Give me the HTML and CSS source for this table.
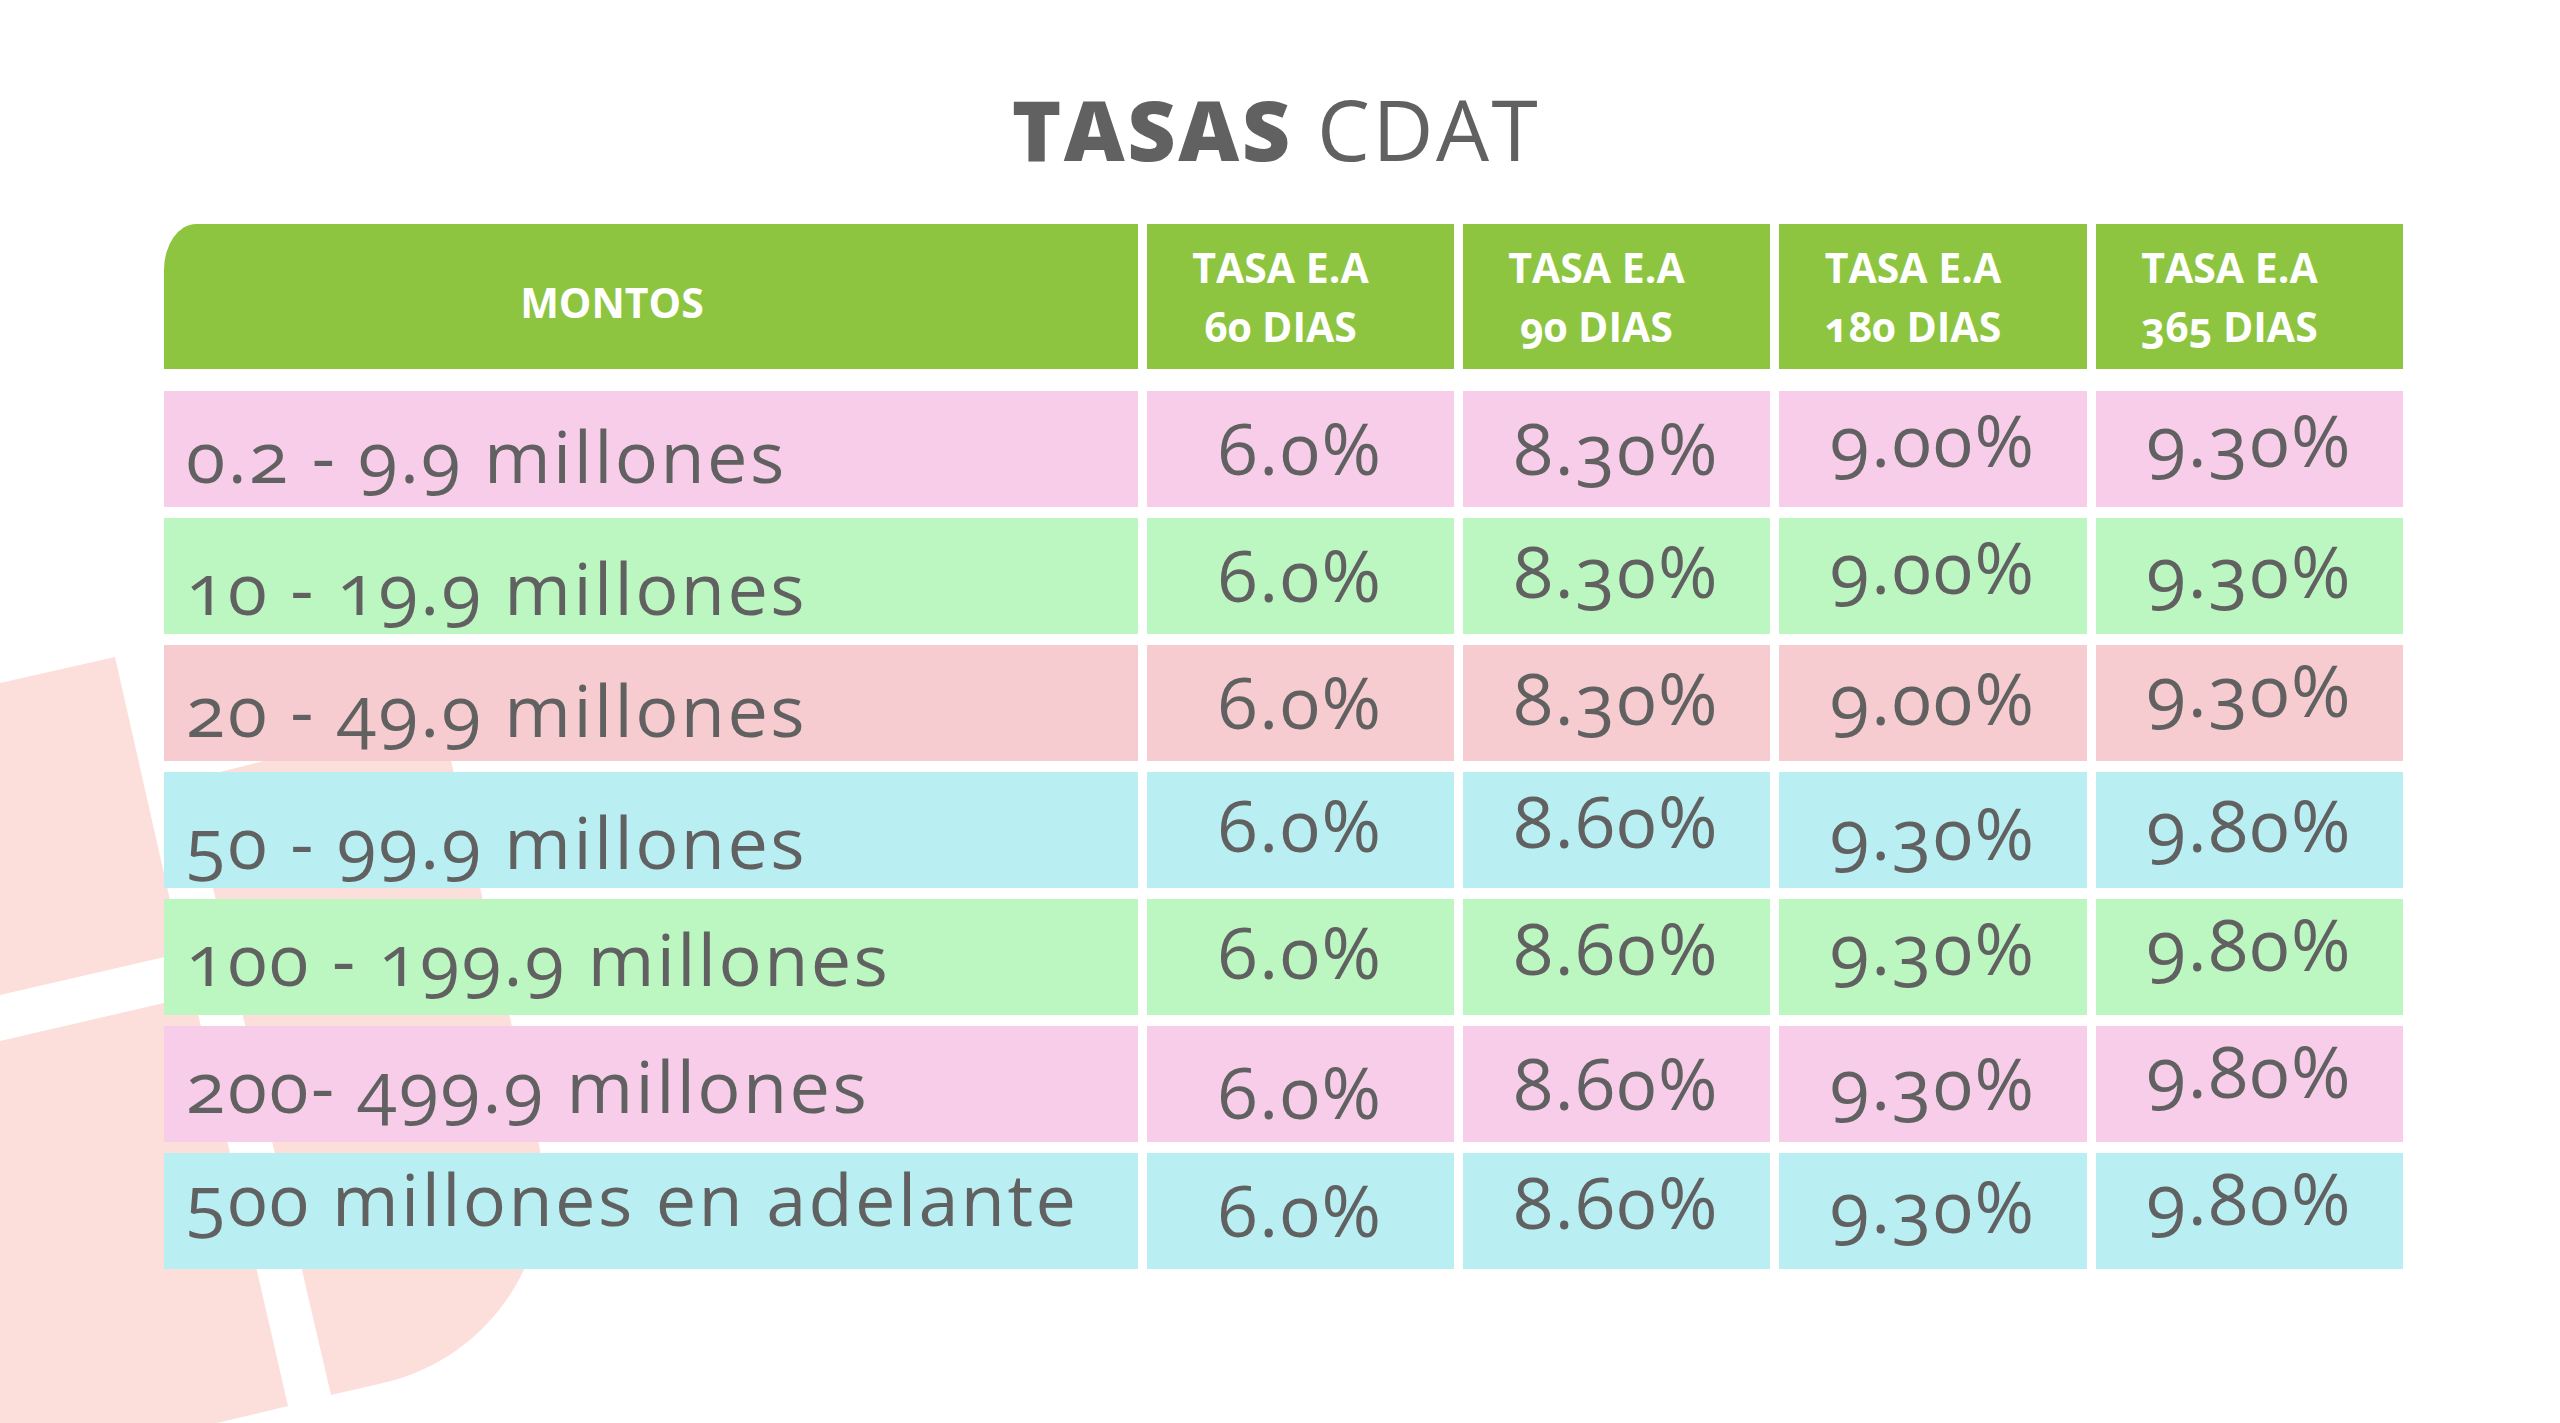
FILE: index.html
```html
<!DOCTYPE html>
<html lang="es">
<head>
<meta charset="utf-8">
<title>Tasas CDAT</title>
<link rel="stylesheet" href="styles.css">
</head>
<body>
<div class="page">
  <svg class="bg-shape" viewBox="0 0 2560 1423" width="2560" height="1423" aria-hidden="true">
    <path d="M0 683 L115 657 L182 953 L0 995 Z"/>
    <path d="M0 1041 L194 996 L288 1406 L0 1475 Z"/>
    <path d="M188 780 L441 717 L538 1140 C563 1249 493 1358 383 1383 L331 1395 Z"/>
  </svg>

  <h1 class="title"><strong>TASAS</strong> CDAT</h1>

  <div class="table">
    <div class="thead">
      <div class="th th-main">MONTOS</div>
      <div class="th">TASA E.A<br>60 DIAS</div>
      <div class="th">TASA E.A<br>90 DIAS</div>
      <div class="th">TASA E.A<br>180 DIAS</div>
      <div class="th">TASA E.A<br>365 DIAS</div>
    </div>

    <div class="tbody">
      <div class="td label pink lb-92">0.2 - 9.9 millones</div>
      <div class="td val pink v-d">6.0%</div>
      <div class="td val pink v-d">8.30%</div>
      <div class="td val pink v-b">9.00%</div>
      <div class="td val pink v-b">9.30%</div>

      <div class="td label green lb-97">10 - 19.9 millones</div>
      <div class="td val green v-d">6.0%</div>
      <div class="td val green v-c">8.30%</div>
      <div class="td val green v-b">9.00%</div>
      <div class="td val green v-c">9.30%</div>

      <div class="td label salmon lb-92">20 - 49.9 millones</div>
      <div class="td val salmon v-d">6.0%</div>
      <div class="td val salmon v-c">8.30%</div>
      <div class="td val salmon v-c">9.00%</div>
      <div class="td val salmon v-a">9.30%</div>

      <div class="td label cyan lb-97">50 - 99.9 millones</div>
      <div class="td val cyan v-c">6.0%</div>
      <div class="td val cyan v-b">8.60%</div>
      <div class="td val cyan v-e">9.30%</div>
      <div class="td val cyan v-c">9.80%</div>

      <div class="td label green lb-87">100 - 199.9 millones</div>
      <div class="td val green v-c">6.0%</div>
      <div class="td val green v-b">8.60%</div>
      <div class="td val green v-b">9.30%</div>
      <div class="td val green v-a">9.80%</div>

      <div class="td label pink lb-87">200- 499.9 millones</div>
      <div class="td val pink v-f">6.0%</div>
      <div class="td val pink v-d">8.60%</div>
      <div class="td val pink v-d">9.30%</div>
      <div class="td val pink v-a">9.80%</div>

      <div class="td label cyan lb-73">500 millones en adelante</div>
      <div class="td val cyan v-d">6.0%</div>
      <div class="td val cyan v-b">8.60%</div>
      <div class="td val cyan v-c">9.30%</div>
      <div class="td val cyan v-a">9.80%</div>
    </div>
  </div>
</div>
</body>
</html>
```

FILE: styles.css
```css
* {
  box-sizing: border-box;
}

html, body {
  margin: 0;
  padding: 0;
  background: #ffffff;
}

body {
  font-family: "Open Sans", "Liberation Sans", sans-serif;
  color: #616161;
  font-variant-numeric: oldstyle-nums;
}

.page {
  position: relative;
  width: 2560px;
  height: 1423px;
  overflow: hidden;
  padding-top: 87px;
}

.bg-shape {
  position: absolute;
  left: 0;
  top: 0;
  z-index: 0;
}

.bg-shape path {
  fill: #fcdfdb;
}

.title {
  position: relative;
  z-index: 1;
  margin: 0;
  text-align: center;
  font-size: 84px;
  line-height: 84px;
  font-weight: 400;
  color: #616161;
  letter-spacing: 2.5px;
  padding-right: 8px;
}

.title strong {
  font-weight: 800;
}

.table {
  position: relative;
  z-index: 1;
  margin: 53px 0 0 164px;
  width: 2239px;
}

.thead,
.tbody {
  display: grid;
  grid-template-columns: 974px 307px 307px 308px 307px;
  column-gap: 9px;
}

.thead {
  height: 145px;
}

.th {
  background: #8dc541;
  color: #ffffff;
  font-weight: 700;
  font-size: 41px;
  line-height: 59px;
  text-align: center;
  display: flex;
  align-items: center;
  justify-content: center;
  padding-right: 40px;
}

.th-main {
  border-top-left-radius: 32px 46px;
  padding-right: 78px;
  padding-top: 12px;
}

.tbody {
  margin-top: 22px;
  grid-auto-rows: 116px;
  row-gap: 11px;
}

.td {
  font-size: 72px;
  line-height: 72px;
  white-space: nowrap;
}

.label {
  padding-left: 22px;
  letter-spacing: 2.4px;
}

.val {
  text-align: center;
  letter-spacing: 2px;
}

.pink { background: #f8cdea; }
.green { background: #bcf7c2; }
.salmon { background: #f7ccd0; }
.cyan { background: #b9eff2; }

/* label baseline positions */
.lb-97 { padding-top: 33px; }
.lb-92 { padding-top: 28px; }
.lb-87 { padding-top: 23px; }
.lb-73 { padding-top: 9px; }

/* value baseline positions */
.v-a { padding-top: 8px; }
.v-b { padding-top: 12px; }
.v-c { padding-top: 16px; }
.v-d { padding-top: 20px; }
.v-e { padding-top: 24px; }
.v-f { padding-top: 29px; }
```
